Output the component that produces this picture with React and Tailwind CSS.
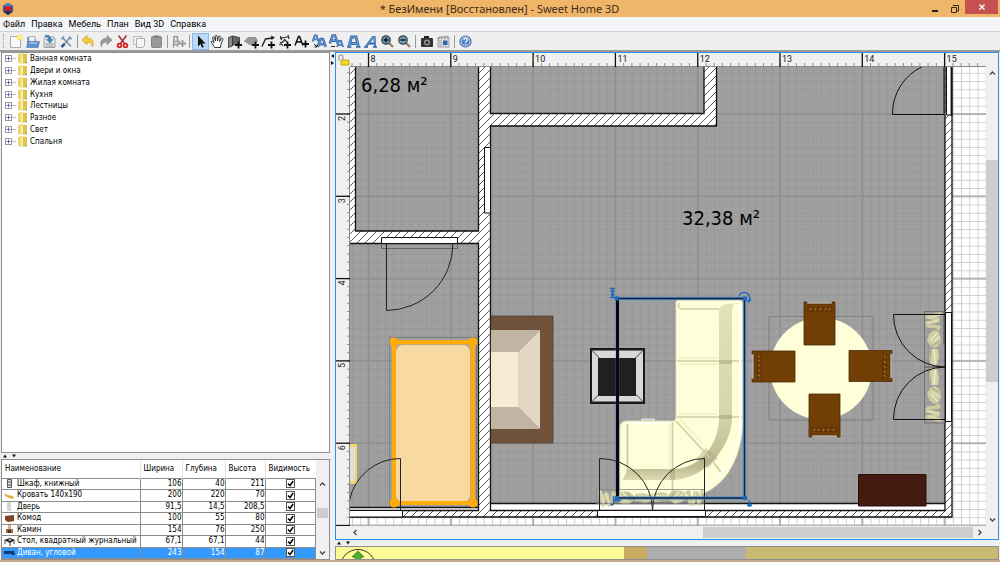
import { useState } from 'react';

const menus = ['Файл', 'Правка', 'Мебель', 'План', 'Вид 3D', 'Справка'];

const categories = [
  'Ванная комната',
  'Двери и окна',
  'Жилая комната',
  'Кухня',
  'Лестницы',
  'Разное',
  'Свет',
  'Спальня'
];

const furniture = [
  { id: 'bookcase', name: 'Шкаф, книжный', width: '106', depth: '40', height: '211' },
  { id: 'bed', name: 'Кровать 140x190', width: '200', depth: '220', height: '70' },
  { id: 'door', name: 'Дверь', width: '91,5', depth: '14,5', height: '208,5' },
  { id: 'chest', name: 'Комод', width: '100', depth: '55', height: '80' },
  { id: 'fireplace', name: 'Камин', width: '154', depth: '76', height: '250' },
  { id: 'table', name: 'Стол, квадратный журнальный', width: '67,1', depth: '67,1', height: '44' },
  { id: 'sofa', name: 'Диван, угловой', width: '243', depth: '154', height: '87' }
];

// Plan scale: one metre on screen, and where metre 8 / metre 2 fall in plan coordinates
const METRE = 82.3;
const ORIGIN_X = 368.5;
const ORIGIN_Y = 114;

const Plus = ({ x = 9, y = 9 }) => (
  <path d={`M${x} ${y + 3}h7M${x + 3.5} ${y - 0.5}v7`} stroke="#111" strokeWidth="1.8" />
);

const LetterA = ({ x, y, s }) => (
  <g transform={`translate(${x} ${y}) scale(${s})`}>
    <path d="M1 10L4.500 0h3L11 10M3 6.500h6" fill="none" stroke="#2f66a8" strokeWidth="3" />
    <path d="M1 10L4.500 0h3L11 10M3 6.500h6" fill="none" stroke="#7eabdc" strokeWidth="1" />
  </g>
);

const icons = {
  new: (
    <>
      <path d="M3.5 3.5h10v11h-10z" fill="#fafafa" stroke="#aaa" />
      <circle cx="12.5" cy="4.5" r="2.6" fill="#fbe94a" />
      <circle cx="12.5" cy="4.5" r="1.1" fill="#fffde0" />
    </>
  ),
  open: (
    <>
      <path d="M3 14V4h4l1 1.500h4V14z" fill="#8a9db3" />
      <path d="M5 3.500h6v6H5z" fill="#eef2f6" stroke="#7b92ad" strokeWidth=".6" />
      <path d="M2.500 14.500l2-6h11l-1.500 6z" fill="#5f93cc" stroke="#3f73ad" strokeWidth=".6" />
      <path d="M5 10h8" stroke="#c3dcf5" />
    </>
  ),
  save: (
    <>
      <path d="M3 6l1-2h9l1 2v8.500H3z" fill="#e4e6e8" stroke="#8b9299" strokeWidth=".8" />
      <path d="M5 10.500h7v3H5z" fill="#c2c6ca" stroke="#969da4" strokeWidth=".5" />
      <path d="M4 2.500c4-1 6 1 6 4h2l-3 3.500-3.500-3.500h2c0-2-1.500-3-3.500-3z" fill="#4389be" stroke="#276a9e" strokeWidth=".5" />
    </>
  ),
  prefs: (
    <>
      <path d="M5 12.500L12 4.500" stroke="#8c959e" strokeWidth="1.600" />
      <path d="M5 5l8 8.500" stroke="#6f94bf" strokeWidth="1.600" />
      <path d="M3 5.500h2.500V3M11.500 3v2.500H14" fill="none" stroke="#7692b0" strokeWidth="1.400" />
      <path d="M3.500 14l3-3" stroke="#355f92" strokeWidth="2.600" />
    </>
  ),
  undo: <path d="M2 7l5-4.500v2.700c5 0 7.500 3 5.500 8.500-.5-3.300-2-4.700-5.500-4.700v2.700z" fill="#f3cd3c" stroke="#c79c1c" strokeWidth=".7" />,
  redo: <path d="M15 7l-5-4.500v2.700c-5 0-7.500 3-5.500 8.500.5-3.300 2-4.700 5.500-4.700v2.700z" fill="#999" stroke="#888" strokeWidth=".7" />,
  cut: (
    <>
      <path d="M4.500 2.500l6 8M12.500 2.500l-6 8" stroke="#a43437" strokeWidth="1.500" />
      <circle cx="5.500" cy="12.500" r="1.900" fill="none" stroke="#d41c22" strokeWidth="1.600" />
      <circle cx="11.500" cy="12.500" r="1.900" fill="none" stroke="#d41c22" strokeWidth="1.600" />
    </>
  ),
  copy: (
    <>
      <path d="M2.500 3.500h8v8h-8z" fill="#f3f3f3" stroke="#bbb" />
      <path d="M5.500 5.500h8v7l-2 2h-6z" fill="#f5f5f5" stroke="#aaa" />
    </>
  ),
  paste: (
    <>
      <rect x="3.500" y="3.500" width="10" height="11" rx="1" fill="#999" stroke="#858585" />
      <path d="M6 2.500h5v2H6z" fill="#777" />
    </>
  ),
  add: (
    <>
      <path d="M4 3v5M7.500 3v5M4 3.500h3.500M3.500 8.500h5.500l-1 3H4zM3.500 11v3.500M7.500 11v3" fill="none" stroke="#999" strokeWidth="1.500" />
      <path d="M9 10.500h7M12.500 7v7" stroke="#999" strokeWidth="1.800" />
    </>
  ),
  select: <path d="M6 2.500v11l2.500-2.400 1.600 3.600 1.700-.8-1.600-3.500h3.300z" fill="#111" />,
  pan: (
    <path
      d="M5.500 14.500L2.500 9.500c-.8-1.500.8-2 1.500-.8l1 1.300-1.300-5c-.4-1.500 1.300-1.800 1.600-.5L6.500 8 6.300 3.300c0-1.500 1.700-1.500 1.800 0L8.500 8l1-4.300c.3-1.300 1.900-1 1.700.4L10.600 8.500l1.600-2.800c.6-1.200 2.100-.5 1.600.7l-1.800 5-.5 3.100z"
      fill="#fff"
      stroke="#222"
      strokeWidth=".9"
    />
  ),
  wall: (
    <>
      <path d="M2.500 4.500l4-1.500v10l-4 1.500z" fill="#888" stroke="#333" strokeWidth=".8" />
      <path d="M6.500 3l7 1.500V11l-7 1z" fill="#666" stroke="#333" strokeWidth=".8" />
      <Plus />
    </>
  ),
  room: (
    <>
      <path d="M1.500 8l4-3.500h7l2 3-2 4-5 .5z" fill="#999" stroke="#777" strokeWidth=".7" />
      <Plus />
    </>
  ),
  polyline: (
    <>
      <path d="M2 13.500l3.500-7.500 7-1" fill="none" stroke="#222" strokeWidth="1.400" />
      <path d="M11 2.500l4 2-3.500 2.500z" fill="#222" />
      <Plus x={8} />
    </>
  ),
  dimension: (
    <>
      <path d="M3 5.500l9-2M3.500 3l1 4M11 2l1 4M2.500 12l5-5M3 9l3 4M7 6l3 3" fill="none" stroke="#333" strokeWidth="1.200" />
      <Plus x={7} />
    </>
  ),
  text: (
    <>
      <path d="M1 12.500l3.500-9h1l3.500 9M2.500 9h5" fill="none" stroke="#111" strokeWidth="1.500" />
      <Plus x={8} y={8} />
    </>
  ),
  bigger: (
    <>
      <LetterA x={1} y={2.500} s={0.6} />
      <LetterA x={6} y={6} s={0.8} />
      <path d="M3 11l3 3m0-2.500V14H3.500" stroke="#222" fill="none" />
    </>
  ),
  smaller: (
    <>
      <LetterA x={1} y={2.500} s={0.8} />
      <LetterA x={8.500} y={8} s={0.6} />
      <path d="M3 13.500h4" stroke="#222" />
    </>
  ),
  bold: (
    <>
      <path d="M4 13.500L6.500 4h4.500l2.500 9.500M6 10.500h5.500" fill="none" stroke="#2f66a8" strokeWidth="2.800" />
      <path d="M4 13.500L6.500 4h4.500l2.500 9.500M6 10.500h5.500" fill="none" stroke="#7eabdc" />
      <path d="M2 14h4.500M11 14h4.500" stroke="#2f66a8" strokeWidth="1.500" />
    </>
  ),
  italic: (
    <>
      <path d="M4 13.500L11 4h1.500l.5 9.500M7 10.500h5.500" fill="none" stroke="#2f66a8" strokeWidth="2.200" />
      <path d="M4 13.500L11 4h1.500l.5 9.500" fill="none" stroke="#7eabdc" strokeWidth=".8" />
      <path d="M2 14h4M11 14h4" stroke="#2f66a8" strokeWidth="1.300" />
    </>
  ),
  zoomIn: (
    <>
      <path d="M10 10l4 4" stroke="#9b8064" strokeWidth="2.400" />
      <circle cx="7" cy="7" r="4.200" fill="#6b9dbb" stroke="#38434c" strokeWidth="1.300" />
      <path d="M4.500 7h5M7 4.500v5" stroke="#111" strokeWidth="1.400" />
    </>
  ),
  zoomOut: (
    <>
      <path d="M10 10l4 4" stroke="#9b8064" strokeWidth="2.400" />
      <circle cx="7" cy="7" r="4.200" fill="#6b9dbb" stroke="#38434c" strokeWidth="1.300" />
      <path d="M4.500 7h5" stroke="#111" strokeWidth="1.400" />
    </>
  ),
  camera: (
    <>
      <rect x="3" y="5" width="12" height="9" rx="1" fill="#333" />
      <path d="M6 3h5v2H6z" fill="#222" />
      <circle cx="9" cy="9.500" r="3" fill="#999" />
      <circle cx="9" cy="9.500" r="1.700" fill="#333" />
    </>
  ),
  video: (
    <>
      <path d="M3 4.500l10-1.500 1 2v9H3z" fill="#ddd" stroke="#888" strokeWidth=".8" />
      <path d="M3 5h10" stroke="#777" strokeDasharray="2 1" />
      <path d="M8 7.500h4.500V12H8z" fill="#2f63a4" />
      <path d="M4 8h3M4 10h3M4 12h3" stroke="#999" strokeWidth=".8" />
    </>
  ),
  help: (
    <>
      <circle cx="8.500" cy="8.500" r="5.500" fill="#eef4fb" stroke="#3c6db0" strokeWidth="1.200" />
      <circle cx="8.500" cy="8.500" r="4.200" fill="#4f84c5" />
      <path d="M6.800 7c0-2.300 3.600-2.300 3.600 0 0 1.200-1.800 1.200-1.800 2.500M8.600 10.600v1.200" fill="none" stroke="#fff" strokeWidth="1.200" />
    </>
  )
};

const toolGroups = [
  [['new', 'Новый'], ['open', 'Открыть'], ['save', 'Сохранить'], ['prefs', 'Настройки']],
  [['undo', 'Отменить'], ['redo', 'Повторить'], ['cut', 'Вырезать'], ['copy', 'Копировать'], ['paste', 'Вставить']],
  [['add', 'Добавить мебель']],
  [
    ['select', 'Выбор'], ['pan', 'Сдвиг'], ['wall', 'Стены'], ['room', 'Комнаты'], ['polyline', 'Линии'],
    ['dimension', 'Размеры'], ['text', 'Текст'], ['bigger', 'Увеличить текст'], ['smaller', 'Уменьшить текст'],
    ['bold', 'Жирный'], ['italic', 'Курсив'], ['zoomIn', 'Приблизить'], ['zoomOut', 'Отдалить']
  ],
  [['camera', 'Фото'], ['video', 'Видео']],
  [['help', 'Справка']]
];

const TitleBar = () => (
  <header className="flex h-[17px] shrink-0 items-center bg-[#efb569] pl-[2px]">
    <svg className="h-3 w-3" viewBox="0 0 12 12">
      <path d="M6 0l5 2.500v6L6 12 1 8.500v-6z" fill="#24529b" />
      <path d="M6 0l5 2.500L6 5 1 2.500z" fill="#4a86c6" />
      <circle cx="6" cy="6" r="3.300" fill="#e01b1e" />
      <path d="M2 9l4-1.500L10 9l-4 3z" fill="#1d2f57" />
    </svg>
    <h1 className="flex-1 pl-[60px] text-center font-['Noto_Sans'] text-[11px] leading-4 text-[#3d2d18]">
      * БезИмени [Восстановлен] - Sweet Home 3D
    </h1>
    <button aria-label="Свернуть" className="flex h-[14px] w-5 items-end justify-center pb-1">
      <span className="h-[2px] w-[6px] bg-[#222]" />
    </button>
    <button aria-label="Развернуть" className="flex h-[14px] w-5 items-center justify-center">
      <svg className="h-2 w-2" viewBox="0 0 8 8" fill="none" stroke="#3b2c17">
        <path d="M.5 2.500h5v5h-5zM2 1V.5h5.500V6H6" />
      </svg>
    </button>
    <button aria-label="Закрыть" className="mr-[2px] flex h-[14px] w-[33px] items-center justify-center self-start bg-[#c75050]">
      <svg className="h-[6px] w-[6px]" viewBox="0 0 6 6" stroke="#fff" strokeWidth="1.400">
        <path d="M.5.5l5 5M5.500.5l-5 5" />
      </svg>
    </button>
  </header>
);

const MenuBar = () => (
  <nav className="flex h-[15px] shrink-0 items-center gap-[6px] border-b border-[#cfd2d6] bg-[#f5f6f9] pl-[3px] font-['Roboto'] text-[9px] leading-3">
    {menus.map((m) => (
      <button key={m}>{m}</button>
    ))}
  </nav>
);

const Toolbar = () => {
  const [mode, setMode] = useState('select');
  return (
    <div className="flex h-[18px] shrink-0 items-center bg-[#efefef]">
      <span className="mr-[3px] ml-[3px] h-[14px] border-l border-dotted border-[#999]" />
      {toolGroups.map((group, i) => (
        <div key={i} className="flex items-center">
          {i > 0 && <span className="mx-[2px] h-[13px] w-px bg-[#9b9b9b]" />}
          {group.map(([id, label]) => (
            <button
              key={id}
              aria-label={label}
              title={label}
              onClick={() => setMode(id)}
              className={`h-[17px] w-[17px] ${mode === id ? 'bg-[#bcd8f4] outline outline-1 -outline-offset-1 outline-[#8ab8ea]' : ''}`}
            >
              <svg className="h-[17px] w-[17px]" viewBox="0 0 17 17">{icons[id]}</svg>
            </button>
          ))}
        </div>
      ))}
    </div>
  );
};

const Folder = () => (
  <svg className="h-[11px] w-[11px]" viewBox="0 0 11 11">
    <path d="M1 1l4-1v10.500L1 10z" fill="#ecd670" />
    <path d="M5 .5l5 .5v9l-5 .8z" fill="#dfc34f" />
    <path d="M4 .5l2 1v9.300l-2-.8z" fill="#f8ecaa" />
    <path d="M8.500 9h1.500v1.500H8.500z" fill="#7fae8e" />
  </svg>
);

const Catalog = () => (
  <section className="min-h-0 flex-1 border border-[#8f8f8f] bg-white">
    <ul className="flex h-[94px] flex-col text-[8px] leading-[11px]">
      {categories.map((c) => (
        <li key={c} className="flex flex-1 items-center pl-[3px]">
          <button aria-label={`Раскрыть ${c}`} className="flex h-[7px] w-[7px] items-center justify-center border border-[#999] bg-white">
            <svg className="h-[5px] w-[5px]" viewBox="0 0 5 5" stroke="#345aa8" strokeWidth=".8">
              <path d="M.5 2.500h4M2.500 .5v4" />
            </svg>
          </button>
          <span className="mr-px h-px w-1 bg-[#bbb]" />
          <Folder />
          <span className="pl-[2px]">{c}</span>
        </li>
      ))}
    </ul>
  </section>
);

const PieceIcon = ({ id }) => (
  <svg className="h-[9px] w-[11px] shrink-0" viewBox="0 0 11 9">
    {id === 'bookcase' && <path d="M3.500.5h4v8h-4zM4 3h3M4 6h3" fill="#ddd" stroke="#5b5350" />}
    {id === 'bed' && <path d="M0 2l3 2 6 1 1 3-5-1-4-2z" fill="#dcae3d" />}
    {id === 'door' && <path d="M3 0h4v9H3z" fill="#d6d6d6" />}
    {id === 'chest' && <path d="M1 2l9-1v6l-6 1-3-2z" fill="#7b451f" />}
    {id === 'fireplace' && (
      <>
        <path d="M4 0h3v4H4z" fill="#ccb28c" />
        <path d="M2 4h7v4H2z" fill="#9a6a3c" />
        <path d="M4 5h3v3H4z" fill="#47362a" />
      </>
    )}
    {id === 'table' && (
      <>
        <path d="M0 3l6-2 5 2-5 3z" fill="#222" />
        <path d="M1 3v4M6 5v4M10 3v4" stroke="#444" />
        <path d="M4 3l2-1 2 1-2 1z" fill="#ddd" />
      </>
    )}
    {id === 'sofa' && <path d="M0 3h10l1 4H8L7 6H0z" fill="#123a78" />}
  </svg>
);

const FurnitureTable = () => {
  const [selected, setSelected] = useState('sofa');
  const [hidden, setHidden] = useState([]);
  const toggle = (id) =>
    setHidden((prev) => (prev.includes(id) ? prev.filter((h) => h !== id) : [...prev, id]));

  return (
    <section className="flex h-[101px] shrink-0 border border-[#8f8f8f] bg-white">
      <div className="min-w-0 flex-1">
        <table className="h-full w-full table-fixed border-collapse text-[8px] leading-[10px]">
          <thead>
            <tr className="h-[18px] text-left">
              <th className="w-[138px] border-r border-[#e3e3e3] p-0 pl-[3px] font-normal">Наименование</th>
              <th className="w-[42px] border-r border-[#e3e3e3] p-0 pl-[3px] font-normal">Ширина</th>
              <th className="w-[43px] border-r border-[#e3e3e3] p-0 pl-[3px] font-normal">Глубина</th>
              <th className="w-10 border-r border-[#e3e3e3] p-0 pl-[3px] font-normal">Высота</th>
              <th className="p-0 pl-[3px] font-normal">Видимость</th>
            </tr>
          </thead>
          <tbody>
            {furniture.map((f) => (
              <tr
                key={f.id}
                onClick={() => setSelected(f.id)}
                className={selected === f.id ? 'bg-[#3399ff] text-white' : 'text-black'}
              >
                <td className="border border-l-0 border-[#8c8c8c] p-0">
                  <div className="flex items-center gap-[2px] pl-[2px] whitespace-nowrap">
                    <PieceIcon id={f.id} />
                    {f.name}
                  </div>
                </td>
                <td className="border border-[#8c8c8c] p-0 text-right">{f.width}</td>
                <td className="border border-[#8c8c8c] p-0 text-right">{f.depth}</td>
                <td className="border border-[#8c8c8c] p-0 text-right">{f.height}</td>
                <td className="border border-[#8c8c8c] p-0">
                  <label className="relative mx-auto block h-[9px] w-[9px]">
                    <input
                      type="checkbox"
                      aria-label={`Видимость: ${f.name}`}
                      checked={!hidden.includes(f.id)}
                      onChange={() => toggle(f.id)}
                      className="peer block h-[9px] w-[9px] appearance-none border border-[#555] bg-white"
                    />
                    <svg className="pointer-events-none absolute inset-0 hidden h-[9px] w-[9px] peer-checked:block" viewBox="0 0 9 9">
                      <path d="M2 4.500l2 2L7.200 2" fill="none" stroke="#000" strokeWidth="1.500" />
                    </svg>
                  </label>
                </td>
              </tr>
            ))}
          </tbody>
        </table>
      </div>
      <div className="flex w-[13px] flex-col items-center bg-[#f0f0f0] pt-[18px]">
        <Chevron dir="up" />
        <span className="mt-auto h-[10px] w-[11px] bg-[#cdcdcd]" />
        <span className="mt-auto flex h-[24px] items-end">
          <Chevron dir="down" />
        </span>
      </div>
    </section>
  );
};

const chevrons = {
  up: 'M1 4.500l2.500-2.500L6 4.500',
  down: 'M1 2.500L3.500 5 6 2.500',
  left: 'M4.500 1L2 3.500 4.500 6',
  right: 'M2.500 1L5 3.500 2.500 6'
};

const Chevron = ({ dir }) => (
  <button aria-label={`scroll ${dir}`} className="flex h-[13px] w-[13px] shrink-0 items-center justify-center">
    <svg className="h-[7px] w-[7px]" viewBox="0 0 7 7" fill="none" stroke="#444" strokeWidth="1.300">
      <path d={chevrons[dir]} />
    </svg>
  </button>
);

const SplitArrows = () => (
  <div className="flex h-[6px] shrink-0 items-center bg-[#f0f0f0] pl-[2px]">
    <svg className="h-1 w-[14px]" viewBox="0 0 14 4">
      <path d="M0 3.500l2-3 2 3zM9 .5h4l-2 3z" fill="#111" />
    </svg>
  </div>
);

const metres = (from, to) => Array.from({ length: to - from + 1 }, (_, i) => from + i);

const HorizontalRuler = () => (
  <svg className="h-[14px] min-w-0 flex-1 font-['Roboto'] text-[9px]">
    <g transform="translate(-350 -53)">
      {metres(0, 76).map((i) => (
        <path key={i} d={`M${ORIGIN_X + (i - 2) * (METRE / 10)} 63v3`} stroke="#777" strokeWidth=".8" />
      ))}
      <path d="M350 66.500h636" stroke="#888" />
      {metres(8, 15).map((m) => (
        <g key={m}>
          <path d={`M${ORIGIN_X + (m - 8) * METRE} 53v14`} stroke="#111" strokeWidth="1.300" />
          <text x={ORIGIN_X + 2 + (m - 8) * METRE} y="62" fill="#222">{m}</text>
        </g>
      ))}
    </g>
  </svg>
);

const VerticalRuler = () => (
  <svg className="w-[14px] shrink-0 font-['Roboto'] text-[9px]">
    <g transform="translate(-336 -67)">
      {metres(0, 62).map((i) => (
        <path key={i} d={`M347 ${ORIGIN_Y + (i - 5) * (METRE / 10)}h3`} stroke="#777" strokeWidth=".8" />
      ))}
      <path d="M349.500 66v480" stroke="#888" />
      {metres(2, 7).map((m) => (
        <g key={m}>
          <path d={`M336 ${ORIGIN_Y + (m - 2) * METRE}h14`} stroke="#111" strokeWidth="1.300" />
          {m < 7 && (
            <text transform={`translate(345 ${ORIGIN_Y + 7 + (m - 2) * METRE}) rotate(-90)`} fill="#222">{m}</text>
          )}
        </g>
      ))}
    </g>
  </svg>
);

// Chair seen from above with its back on top, 31 x 43
const Chair = ({ transform }) => (
  <g transform={transform}>
    <path d="M0 0h3v2h25V0h3v43H0z" fill="#713f05" stroke="#4b2a05" strokeWidth=".8" />
    <path d="M1 9h29M3 5.500h25" stroke="#4b2a05" strokeWidth=".8" />
    <path d="M7 5.500l-1 3M12 5.500l-1 3M17 5.500l-1 3M22 5.500l-1 3M26 5.500l-1 3" stroke="#b98238" strokeWidth=".8" />
    <path d="M3 1h25" stroke="#c9c0b4" strokeWidth=".8" />
  </g>
);

const Sofa = () => (
  <g>
    <path
      d="M679 300h60q4 0 4 5v112c0 45-22 78-56 80h-62q-5 0-5-6v-63q0-7 7-7h46q3 0 3-4V305q-1-5 3-5z"
      fill="#fefed8"
      stroke="#e4e3b8"
      strokeWidth=".8"
    />
    {/* Back rest */}
    <path d="M719 310q1-5 8-6l12-1-4 3q-3 2-3 6v105c0 30-27 62-59 63h-49l4-11h45c27 0 46-24 46-52z" fill="url(#backrest)" />
    <path d="M719 360h13v4h-13zM719 415h13v4h-13z" fill="#a9a67f" opacity=".6" />
    <path d="M706 448l12 10-10 10-12-9z" fill="#a9a67f" opacity=".4" />
    <path d="M670 469h5v11h-5z" fill="#a9a67f" opacity=".5" />
    {/* Seams and arm rests */}
    <path d="M677 361h42M732 361h10M677 417h42M732 417h10M672.500 422v47M672.500 480v14M676 421l34 37M714 463l8 11" stroke="#cfcda2" strokeWidth="1.600" />
    <path d="M679 358h38M679 364h38M679 414h38M669.500 424v44M680 419l22 24" stroke="#f3f2c9" strokeWidth="2" fill="none" />
    <path d="M719 309h-37q-5-1-3-6" stroke="#d2d0a5" strokeWidth="1.600" fill="none" />
    <path d="M627.500 424v44q0 6-4 12" stroke="#d2d0a5" strokeWidth="2" fill="none" />
    <path d="M733 306c2-2 7-2 7 3v108c0 33-14 58-37 71" stroke="#fffff2" strokeWidth="2" fill="none" />
    <path d="M630 423h38M678 312v42M678 367v44M626 488q2-4 6-4" stroke="#fff" strokeWidth="1.300" fill="none" />
  </g>
);

// Gathered curtain, 54 long and 18 deep
const Curtain = ({ transform }) => (
  <g transform={transform} fill="none" strokeLinecap="round" strokeLinejoin="round">
    <path d="M2 3l3 13 2-11 2 0 2 11 3-1 1-11 2 1" stroke="#cfcba0" strokeWidth="3.500" />
    <path d="M3 3l3 11M8 5l3 10" stroke="#e9e6c4" strokeWidth="1.200" />
    <path d="M20 4q6-3 12-1l4 4-1 5-6 4-7-2-4-5z" fill="#cfcba0" />
    <path d="M21 6l7 6M25 4l5 6" stroke="#ebe8c6" strokeWidth="1.500" />
    <path d="M30 4l4 8" stroke="#aaa77e" />
    <path d="M37 5l7-1 9 2 1 6-8 2-9-2z" fill="#d5d1a6" />
    <path d="M38 9l13-1" stroke="#eeebcb" strokeWidth="1.800" />
    <path d="M39 12l8 1" stroke="#aaa77e" />
  </g>
);

const FloorPlan = () => (
  <svg className="min-w-0 flex-1 bg-white">
    <defs>
      <pattern id="minor" x={ORIGIN_X} y={ORIGIN_Y} width={METRE / 10} height={METRE / 10} patternUnits="userSpaceOnUse">
        <path d={`M0 .5h${METRE}M.5 0v${METRE}`} stroke="#d0d0d0" />
      </pattern>
      <pattern id="major" x={ORIGIN_X - 1} y={ORIGIN_Y - 1} width={METRE} height={METRE} patternUnits="userSpaceOnUse">
        <path d={`M0 1h${METRE}M1 0v${METRE}`} stroke="#a4a4a4" strokeWidth="1.500" />
      </pattern>
      <pattern id="hatch" width="8" height="8" patternUnits="userSpaceOnUse">
        <path d="M0 0h8v8H0z" fill="#fff" />
        <path d="M-2 10L10-2M-2 2l4-4M6 10l4-4" stroke="#444" strokeWidth=".9" />
      </pattern>
      <linearGradient id="backrest" x1="0" y1="0" x2="0" y2="1">
        <stop offset="0" stopColor="#e3e1b8" />
        <stop offset=".6" stopColor="#d8d6ac" />
        <stop offset=".92" stopColor="#bcb98f" />
        <stop offset="1" stopColor="#dddbb2" />
      </linearGradient>
    </defs>

    <g transform="translate(-350 -67)">
      <path d="M350 66h1200v900H350z" fill="url(#minor)" />
      <path d="M350 66h1200v900H350z" fill="url(#major)" />

      {/* Rooms */}
      <path d="M355 66h123v165H355zM350 244h128v263H350zM491 66h213v47H491zM491 126h226V66h228v437H491z" fill="#8a8a8a" fillOpacity=".81" />
      <path d="M350 508h128v3H350zM491 504h454v7H491z" fill="#fff" />
      <path d="M491 503.500h454M350 507.500h128" stroke="#111" strokeWidth="1.400" />

      {/* Walls */}
      <path
        d="M350 66h5.500v165H478.500V66h12v47.500H704V66h12.500v60h-226v384.500h454.500V66h7v451H350v-6.500h128.500v-267H350z"
        fill="url(#hatch)"
      />
      <path
        d="M355.500 66v165h123V66M490.500 66v47.500H704V66M716.500 66v60h-226v384.500H945V66M952 66v451H350M350 510.500h128.500v-267H350"
        fill="none"
        stroke="#111"
        strokeWidth="1.300"
      />

      {/* Fireplace */}
      <path d="M491 316h62v127h-62z" fill="#70513a" stroke="#54402f" strokeWidth=".8" />
      <path d="M491 330h49l-22 22h-27zM491 407h27l22 22h-49z" fill="#c0b5a2" />
      <path d="M540 330v99l-22-22v-55z" fill="#e2d7c2" />
      <path d="M491 352h27v55h-27z" fill="#f7ebd5" />

      {/* Bedside corner and bed */}
      <path d="M350 444h7v40h-7z" fill="#f6d264" />
      <path d="M350 447h5v34h-5z" fill="#ddd" />
      <path d="M389.500 337.500h87v169h-87z" fill="none" stroke="#777" strokeWidth=".8" />
      <rect x="393" y="342" width="80" height="162" fill="#c3a87c" />
      <rect x="396" y="345" width="74" height="157" rx="7" fill="#f8d9a2" />
      <path d="M394 342h79v161h-79z" fill="none" stroke="#ffac06" strokeWidth="4" />
      {[[394, 342], [473, 342], [394, 503], [473, 503]].map(([x, y]) => (
        <circle key={`${x}-${y}`} cx={x} cy={y} r="4.500" fill="#ffac06" />
      ))}

      {/* Windows and doors of the left rooms */}
      <g fill="#fff" stroke="#111">
        <path d="M381.500 237.500h76v6h-76zM484.500 147.500h6v65.500h-6zM350 510.500h52.500v6.500H350" />
      </g>
      <g fill="none" stroke="#222">
        <path d="M381.500 244v4.500h76V244" stroke="#555" strokeWidth=".8" />
        <path d="M386.500 244v66.500a67 67 0 0 0 66.500-67" />
        <path d="M400.500 510v-51.500a52 52 0 0 0-51 42" />
      </g>

      {/* Coffee table */}
      <path d="M590 348h55v56h-55z" fill="#191919" />
      <path d="M592 350.500h51v51h-51z" fill="#d8d8d8" />
      <path d="M592 350.500l51 51M643 350.500l-51 51" stroke="#444" />
      <path d="M598 358h38v38h-38z" fill="#202020" />

      <path d="M641 419.500h14" stroke="#ddd" strokeWidth="2" />
      <Sofa />

      {/* Balcony doors in the lower wall */}
      <path d="M597.500 510.500h108v6h-108z" fill="#fff" stroke="#111" />
      <Curtain transform="translate(598 489)" />
      <Curtain transform="translate(704 488) scale(-1 1)" />
      <path d="M596.500 489.500h108v14h-108z" fill="none" stroke="#888" strokeWidth=".8" />
      <path d="M599.500 510v-51.500a52.500 52 0 0 1 53 52a52.500 52 0 0 1 52-52V510" fill="none" stroke="#222" />

      {/* Selection of the corner sofa */}
      <path d="M617.500 298.500h127v199.500h-127z" fill="none" stroke="#4787cf" strokeWidth="3.500" opacity=".75" />
      <path d="M617.500 298.500h127v199.500h-127z" fill="none" stroke="#10233c" strokeWidth="1.300" />
      <path d="M617.500 298v201" stroke="#06090f" strokeWidth="3" />
      <g fill="none" stroke="#1c68bd" strokeWidth="1.400">
        <path d="M610 288.500h5M610 297.500h5M612.500 290v7M611 292l1.500-2 1.500 2M611 294l1.500 2 1.500-2" />
        <path d="M739 296a5.500 5.500 0 1 1 10 4.500M751 299l-2 3-2.500-2" />
        <path d="M749.500 500v7M747 505.500h5M748 504l1.500 2 1.500-2" />
        <path d="M613.500 496v8M610.500 504l3 1M613 500.500h8" />
      </g>
      <path d="M615 296.500h4v4h-4zM743 296.500h4v4h-4zM615 496h4v4h-4zM743 496h4v4h-4z" fill="#1c68bd" />

      {/* Dining set */}
      <circle cx="821" cy="368.500" r="51" fill="#fefed9" />
      <path d="M769 316.500h104v103.500H769z" fill="none" stroke="#777" strokeWidth=".8" />
      <Chair transform="translate(804 302)" />
      <Chair transform="translate(840 437) rotate(180)" />
      <Chair transform="translate(752 382) rotate(-90)" />
      <Chair transform="translate(892 350.500) rotate(90)" />

      <path d="M858.500 474.500h67.500v31.500h-67.500z" fill="#431910" stroke="#2b0e08" />

      {/* Doors of the right wall */}
      <path d="M945.500 312.500h6v109h-6zM946.500 60h5v55h-5z" fill="#fff" stroke="#111" />
      <path d="M943.500 66v49" stroke="#555" />
      <path d="M951.500 66v50" stroke="#111" strokeWidth="1.800" />
      <path d="M944.500 312v32" stroke="#111" strokeWidth="1.500" />
      <Curtain transform="translate(943 312) rotate(90)" />
      <Curtain transform="translate(943 422) rotate(-90) scale(1 -1)" />
      <path d="M924.500 311.500h20v55.500h-20zM924.500 367h20v56h-20z" fill="none" stroke="#666" strokeWidth=".8" />
      <path d="M945 314.500h-51.500a52 52 0 0 0 52 52.500a52 52 0 0 0-52 52.500H945" fill="none" stroke="#111" />
      <path d="M944 114.500h-51.500a52 52 0 0 1 30-48" fill="none" stroke="#111" />

      <g className="font-['DejaVu_Sans_Condensed','Noto_Sans',sans-serif] text-[20px]" fill="#000">
        <text x="361" y="92">6,28 м²</text>
        <text x="682" y="225">32,38 м²</text>
      </g>
    </g>
  </svg>
);

const PlanPane = () => (
  <section className="flex min-h-0 flex-1 flex-col border border-[#2f8ff0] bg-[#f0f0f0]">
    <div className="flex h-[14px] shrink-0">
      <button aria-label="Замок" className="h-[14px] w-[14px]">
        <svg className="h-[14px] w-[14px]" viewBox="0 0 14 14">
          <path d="M3 8V4q0-2 2-2t2 2v3" fill="none" stroke="#aaa" strokeWidth="1.400" />
          <path d="M5 7h8v5H5z" fill="#f2d71d" stroke="#b79c14" strokeWidth=".8" />
        </svg>
      </button>
      <HorizontalRuler />
      <span className="w-3" />
    </div>
    <div className="flex min-h-0 flex-1">
      <VerticalRuler />
      <FloorPlan />
      <div className="flex w-3 shrink-0 flex-col items-center">
        <Chevron dir="up" />
        <span className="flex-[80]" />
        <span className="w-3 flex-[223] bg-[#cdcdcd]" />
        <span className="flex-[132]" />
        <Chevron dir="down" />
      </div>
    </div>
    <div className="flex h-[13px] shrink-0 items-center pr-3 pl-[13px]">
      <Chevron dir="left" />
      <span className="flex-[341]" />
      <span className="h-[11px] flex-[270] bg-[#cdcdcd]" />
      <Chevron dir="right" />
    </div>
  </section>
);

const View3D = () => (
  <section className="flex h-[14px] shrink-0 overflow-hidden border border-[#8f8f8f]">
    <div className="min-w-0 flex-[288] bg-[#fdfb98]">
      <svg className="h-3 w-12" viewBox="0 0 48 12">
        <circle cx="22" cy="20" r="17.500" fill="none" stroke="#333" />
        <path d="M22 4l6 6h-3v4h-6v-4h-3z" fill="#58a838" stroke="#2f7c22" strokeWidth=".8" />
      </svg>
    </div>
    <div className="flex-[23] bg-[#c9aa5e]" />
    <div className="flex-[98] bg-[#adadad]" />
    <div className="flex-[252] bg-[#c8ba73]" />
  </section>
);

const App = () => (
  <div className="flex h-screen flex-col overflow-hidden bg-[#f0f0f0] font-['DejaVu_Sans_Condensed','Noto_Sans',sans-serif] text-black">
    <TitleBar />
    <MenuBar />
    <Toolbar />
    <main className="flex min-h-0 flex-1 border-t-2 border-[#9a9a9a]">
      <div className="flex w-[330px] shrink-0 flex-col pl-px">
        <Catalog />
        <SplitArrows />
        <FurnitureTable />
      </div>
      <div className="w-[5px] shrink-0 pt-[2px] pl-px">
        <svg className="h-[12px] w-1" viewBox="0 0 4 12">
          <path d="M3 0v4L0 2zM0 7v4l3-2z" fill="#111" />
        </svg>
      </div>
      <div className="flex min-w-0 flex-1 flex-col pr-px">
        <PlanPane />
        <SplitArrows />
        <View3D />
      </div>
    </main>
    <footer className="h-[2px] shrink-0 bg-[#c3a98c]" />
  </div>
);

export default App;
